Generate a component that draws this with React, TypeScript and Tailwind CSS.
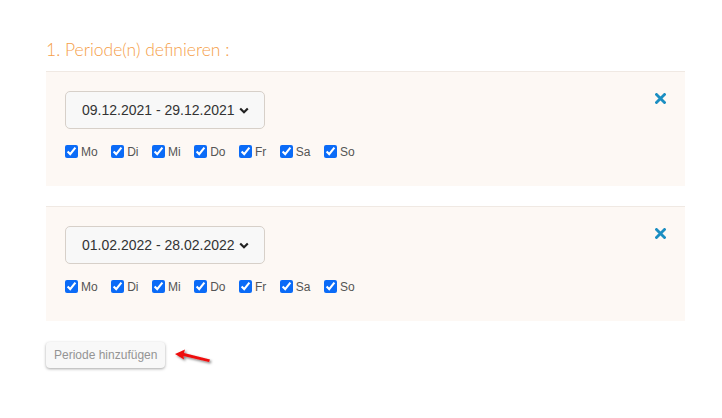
import { useState } from 'react'

const days = ['Mo', 'Di', 'Mi', 'Do', 'Fr', 'Sa', 'So']

function Period({ range }: { range: string }) {
  const [checked, setChecked] = useState<boolean[]>(days.map(() => true))
  return (
    <div className="flex border-t border-[#f0e9e3] bg-[#fdf8f4] pl-[19px] pr-[19px] pt-[19px] h-[115px]">
      <div className="flex-1">
        <button className="flex h-[38px] w-[200px] items-center rounded-[5px] border border-[#d7d0c9] bg-[#f8f8f8] pl-[16px] text-[14px] text-[#333] font-['Liberation_Sans',Arial,sans-serif]">
          <span>{range}</span>
          <svg width="10" height="7" viewBox="0 0 10 7" className="ml-[4px] mt-[1px]">
            <path d="M1.2 1.5 L5 5.2 L8.8 1.5" stroke="#222" strokeWidth="2.2" fill="none" />
          </svg>
        </button>
        <div className="mt-[12px] flex items-center text-[12px] text-[#555] font-['Liberation_Sans',Arial,sans-serif]">
          {days.map((d, i) => (
            <label key={d} className="mr-[13.5px] flex items-center">
              <input
                type="checkbox"
                checked={checked[i]}
                onChange={() => setChecked(c => c.map((v, j) => (j === i ? !v : v)))}
                className="m-0 h-[13px] w-[13px] accent-[#0b6bf7]"
              />
              <span className="ml-[3px] mt-[2px]">{d}</span>
            </label>
          ))}
        </div>
      </div>
      <svg width="11" height="11" viewBox="0 0 11 11" className="mt-[2px]">
        <path d="M1.5 1.5 L9.5 9.5 M9.5 1.5 L1.5 9.5" stroke="#1b8ec2" strokeWidth="2.8" strokeLinecap="square" />
      </svg>
    </div>
  )
}

export default function App() {
  return (
    <div className="h-[418px] w-[722px] bg-white px-[46px] pt-[39px] font-['Lato',sans-serif]">
      <h2 className="text-[17.5px] font-light leading-[21px] text-[#f5a04a]">1. Periode(n) definieren :</h2>
      <div className="mt-[11px] w-[639px]">
        <Period range="09.12.2021 - 29.12.2021" />
        <div className="h-[20px]" />
        <Period range="01.02.2022 - 28.02.2022" />
      </div>
      <div className="mt-[21px] flex items-center">
        <button className="h-[26px] rounded-[4px] bg-[#f8f8f8] px-[8px] text-[12px] text-[#949494] shadow-[0_1px_3px_rgba(0,0,0,0.35)] font-['Liberation_Sans',Arial,sans-serif]">
          Periode hinzufügen
        </button>
        <svg width="42" height="20" viewBox="0 0 42 20" className="ml-[8px] mt-[5px]">
          <defs>
            <filter id="sh" x="-20%" y="-50%" width="150%" height="200%">
              <feDropShadow dx="1.5" dy="1.5" stdDeviation="1.2" floodColor="#000" floodOpacity="0.5" />
            </filter>
          </defs>
          <g filter="url(#sh)">
            <path d="M2 6 L12 1.5 L11 5 L37 11.5 L36 14 L10.5 8 L11 11.5 Z" fill="#ee1111" />
          </g>
        </svg>
      </div>
    </div>
  )
}
